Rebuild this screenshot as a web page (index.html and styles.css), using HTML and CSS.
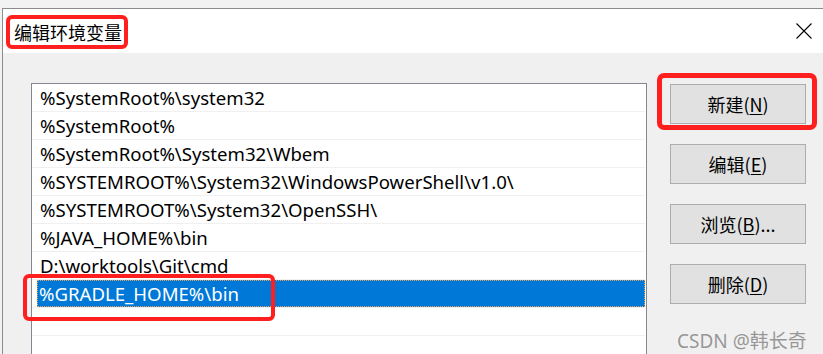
FILE: index.html
```html
<!DOCTYPE html>
<html lang="zh-CN">
<head>
<meta charset="utf-8">
<title>编辑环境变量</title>
<link rel="stylesheet" href="styles.css">
</head>
<body>
<div class="desktop">
  <div class="window">
    <div class="titlebar">
      <div class="title-wrap">
        <span class="title">编辑环境变量</span>
        <span class="mark mark-title"></span>
      </div>
      <button class="close" aria-label="关闭">
        <svg width="16" height="16" viewBox="0 0 16 16"><path d="M0.5 0.5L15.5 15.5M15.5 0.5L0.5 15.5" stroke="#000" stroke-width="1.1" fill="none"/></svg>
      </button>
    </div>
    <div class="content">
      <div class="listbox">
        <div class="row">%SystemRoot%\system32</div>
        <div class="row">%SystemRoot%</div>
        <div class="row">%SystemRoot%\System32\Wbem</div>
        <div class="row">%SYSTEMROOT%\System32\WindowsPowerShell\v1.0\</div>
        <div class="row">%SYSTEMROOT%\System32\OpenSSH\</div>
        <div class="row">%JAVA_HOME%\bin</div>
        <div class="row">D:\worktools\Git\cmd</div>
        <div class="row selected-row">
          <span class="sel">%GRADLE_HOME%\bin</span>
          <span class="mark mark-row"></span>
        </div>
        <div class="row"></div>
      </div>
      <div class="buttons">
        <div class="btn-wrap">
          <button class="btn">新建(<u>N</u>)</button>
          <span class="mark mark-btn"></span>
        </div>
        <div class="btn-wrap"><button class="btn">编辑(<u>E</u>)</button></div>
        <div class="btn-wrap"><button class="btn">浏览(<u>B</u>)...</button></div>
        <div class="btn-wrap"><button class="btn">删除(<u>D</u>)</button></div>
        <div class="watermark">CSDN @韩长奇</div>
      </div>
    </div>
  </div>
</div>
</body>
</html>
```

FILE: styles.css
```css
* { box-sizing: border-box; }
html, body { margin: 0; padding: 0; }
body {
  width: 823px;
  height: 354px;
  overflow: hidden;
  background: #f3f3f3;
  font-family: "Noto Sans", "Noto Sans CJK SC", sans-serif;
}
.desktop {
  width: 823px;
  height: 354px;
  overflow: hidden;
  padding: 8px 0 0 2px;
  background: #f2f2f2;
}
.window {
  width: 821px;
  height: 346px;
  overflow: hidden;
  border-top: 1px solid #8c8c8c;
  border-left: 1px solid #8c8c8c;
  display: flex;
  flex-direction: column;
}
.titlebar {
  height: 44px;
  flex: none;
  background: #fff;
  display: flex;
  align-items: flex-start;
  position: relative;
}
.title-wrap {
  position: relative;
  margin: 6px 0 0 3px;
  width: 122px;
  height: 34px;
  display: flex;
  align-items: center;
}
.title {
  font-family: "Noto Sans CJK SC", sans-serif;
  font-size: 18px;
  color: #000;
  margin-left: 8px;
}
.mark {
  position: absolute;
  border: 4px solid #ff1f1f;
  border-radius: 6px;
  pointer-events: none;
}
.mark-title { left: 0; top: 0; right: 0; bottom: 0; }
.close {
  position: absolute;
  left: 793px;
  top: 14px;
  width: 16px;
  height: 16px;
  padding: 0;
  border: 0;
  background: transparent;
  display: flex;
}
.content {
  flex: 1;
  min-height: 0;
  background: #f0f0f0;
  display: flex;
  align-items: flex-start;
  padding: 30px 0 0 28px;
  gap: 23px;
}
.listbox {
  width: 616px;
  height: 271px;
  background: #fff;
  border: 1px solid #828790;
  border-bottom: 0;
  padding: 0 1px 0 0;
}
.row {
  height: 28px;
  border-bottom: 1px solid #f0f0f0;
  padding-left: 8px;
  font-size: 18.6px;
  line-height: 27px;
  color: #000;
  white-space: nowrap;
  position: relative;
}
.selected-row { padding-left: 5px; }
.sel {
  display: block;
  height: 27px;
  background: #0078d7;
  color: #fff;
  padding-left: 2px;
  outline: 1px dotted #e8a060;
  outline-offset: -1px;
}
.mark-row { left: -9px; top: -6px; width: 252px; height: 47px; }
.buttons {
  display: flex;
  flex-direction: column;
  gap: 20px;
  padding-top: 1px;
}
.btn-wrap { position: relative; width: 136px; height: 40px; }
.btn {
  width: 136px;
  height: 40px;
  background: #e1e1e1;
  border: 1px solid #adadad;
  font-family: "Noto Sans CJK SC", sans-serif;
  font-size: 18px;
  color: #000;
  padding: 0;
}
.btn u { text-decoration-thickness: 1px; text-underline-offset: 2px; }
.mark-btn { left: -13px; top: -11px; width: 160px; height: 57px; border-width: 5px; border-radius: 7px; }
.watermark {
  margin-top: 2px;
  margin-left: 7px;
  font-family: "Noto Sans", "Noto Sans CJK SC", sans-serif;
  font-size: 19px;
  color: rgba(120,120,120,0.75);
  white-space: nowrap;
}
```
